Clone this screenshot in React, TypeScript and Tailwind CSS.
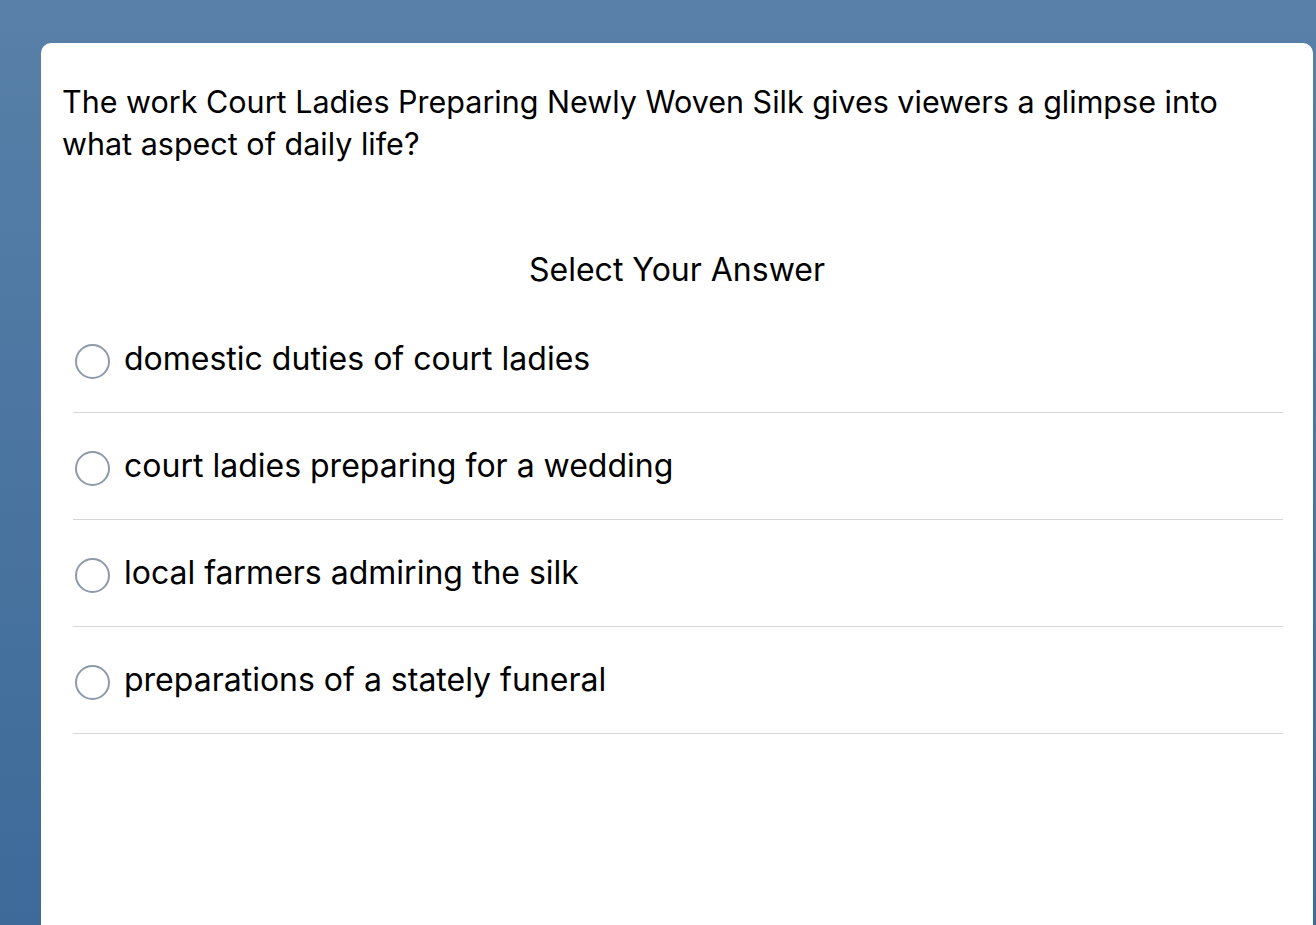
const options = [
  'domestic duties of court ladies',
  'court ladies preparing for a wedding',
  'local farmers admiring the silk',
  'preparations of a stately funeral',
];

export default function App() {
  return (
    <div
      className="h-[925px] overflow-hidden bg-gradient-to-b from-[#5880a8] to-[#3d6a99] pt-[43px] pl-[41px] pr-[3px]"
      style={{ fontFamily: 'Inter, "Noto Sans", sans-serif' }}
    >
      <div className="bg-white rounded-t-[10px] h-[900px] pt-[38px] px-[21px]">
        <p className="mr-[20px] text-[30.5px] leading-[42px] text-black">
          The work Court Ladies Preparing Newly Woven Silk gives viewers a glimpse into what aspect of daily life?
        </p>
        <h2 className="mt-[85px] text-center text-[32px] leading-[40px] text-black">
          Select Your Answer
        </h2>
        <div className="mt-[16px] ml-[11px] mr-[9px]">
          {options.map((o) => (
            <label
              key={o}
              className="flex items-center h-[107px] border-b border-[#d6d6d6] cursor-pointer"
            >
              <span className="ml-[2px] w-[35px] h-[35px] rounded-full border-2 border-[#8c9aa9] shrink-0 mt-[4px]" />
              <span className="ml-[14px] text-[32px] leading-[40px] text-black">{o}</span>
            </label>
          ))}
        </div>
      </div>
    </div>
  );
}
